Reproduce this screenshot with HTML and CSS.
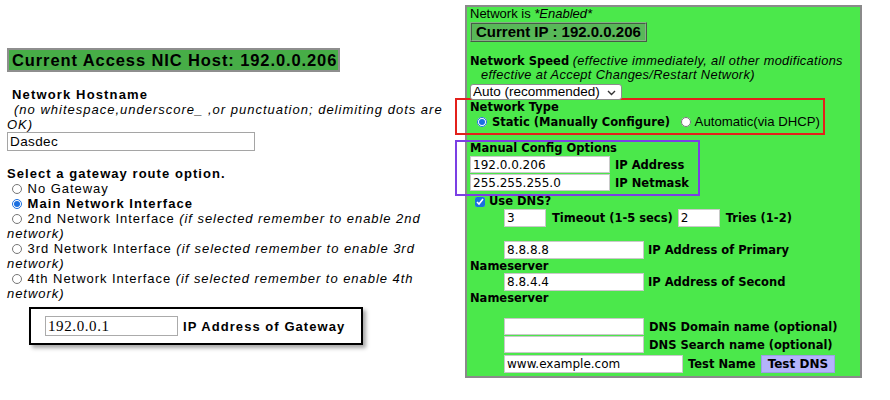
FILE: index.html
```html
<!DOCTYPE html>
<html>
<head>
<meta charset="utf-8">
<title>Network Settings</title>
<link rel="stylesheet" href="styles.css">
</head>
<body>
<div class="page">
  <div class="left">
    <div class="nic">Current Access NIC Host: 192.0.0.206</div>
    <div class="hostname">
      <div class="hlabel">Network Hostname</div>
      <div class="hnote">(no whitespace,underscore_ ,or punctuation; delimiting dots are<br>OK)</div>
      <input class="hinput" type="text" value="Dasdec">
    </div>
    <div class="gateway">
      <div class="gwtitle">Select a gateway route option.</div>
      <div class="opt"><input class="rad" type="radio" name="gw"> No Gateway</div>
      <div class="opt"><input class="rad" type="radio" name="gw" checked> <b>Main Network Interface</b></div>
      <div class="opt"><input class="rad" type="radio" name="gw"> 2nd Network Interface <i>(if selected remember to enable 2nd</i></div>
      <div class="opt wrap"><i>network)</i></div>
      <div class="opt"><input class="rad" type="radio" name="gw"> 3rd Network Interface <i>(if selected remember to enable 3rd</i></div>
      <div class="opt wrap"><i>network)</i></div>
      <div class="opt"><input class="rad" type="radio" name="gw"> 4th Network Interface <i>(if selected remember to enable 4th</i></div>
      <div class="opt wrap"><i>network)</i></div>
    </div>
    <div class="gwbox">
      <input class="gwinput" type="text" value="192.0.0.1">
      <b class="gwlabel">IP Address of Gateway</b>
    </div>
  </div>

  <div class="panel">
    <div class="status">Network is <i>*Enabled*</i></div>
    <div class="curip">Current IP : 192.0.0.206</div>
    <div class="speed"><b class="vb">Network Speed</b> <i>(effective immediately, all other modifications</i><br><i>effective at Accept Changes/Restart Network)</i></div>
    <div class="selwrap">
      <select class="sel"><option>Auto (recommended)</option></select>
      <svg class="chev" width="9" height="6" viewBox="0 0 9 6"><path d="M1 1 L4.5 4.5 L8 1" fill="none" stroke="#333" stroke-width="1.4"/></svg>
    </div>
    <div class="typebox">
      <div class="vb">Network Type</div>
      <div class="typerow">
        <input class="rad rstatic" type="radio" name="nt" checked><b class="vb">Static (Manually Configure)</b>
        <input class="rad rauto" type="radio" name="nt"><span class="auto">Automatic(via DHCP)</span>
      </div>
    </div>
    <div class="cfgbox">
      <div class="vb cfgtitle">Manual Config Options</div>
      <div class="cfgrow"><input class="cin wide" type="text" value="192.0.0.206"><b class="vb">IP Address</b></div>
      <div class="cfgrow"><input class="cin wide" type="text" value="255.255.255.0"><b class="vb">IP Netmask</b></div>
    </div>
    <div class="usedns"><input class="chk" type="checkbox" checked><b class="vb">Use DNS?</b></div>
    <div class="timerow">
      <input class="cin short" type="text" value="3"><b class="vb">Timeout (1-5 secs)</b>
      <input class="cin short" type="text" value="2"><b class="vb">Tries (1-2)</b>
    </div>
    <div class="nsrow first"><input class="cin ns" type="text" value="8.8.8.8"> IP Address of Primary Nameserver</div>
    <div class="nsrow"><input class="cin ns" type="text" value="8.8.4.4"> IP Address of Second Nameserver</div>
    <div class="optrow domain"><input class="cin wide" type="text" value=""><b class="vb">DNS Domain name (optional)</b></div>
    <div class="optrow search"><input class="cin wide" type="text" value=""><b class="vb">DNS Search name (optional)</b></div>
    <div class="optrow test"><input class="cin testin" type="text" value="www.example.com"><b class="vb">Test Name</b><button class="testbtn" type="button">Test DNS</button></div>
  </div>
</div>
</body>
</html>
```
FILE: styles.css
```css
body {
  margin: 0;
  background: #fff;
  color: #000;
  font-family: "Liberation Sans", Arial, sans-serif;
}

.page {
  display: flex;
  align-items: flex-start;
}

/* ---------- left column ---------- */
.left {
  width: 458px;
  padding: 48px 0 0 7px;
  font-size: 13px;
  line-height: 15px;
  letter-spacing: 0.95px;
}

.left b,
.hlabel,
.gwtitle {
  letter-spacing: 1.05px;
}

.nic {
  width: max-content;
  font-weight: bold;
  font-size: 16.5px;
  line-height: 20px;
  letter-spacing: 0.9px;
  background: #47ad47;
  border: 2px solid #8e8e8e;
  padding: 0 1px 0 3px;
}

.hostname {
  margin-top: 15px;
}

.hlabel {
  font-weight: bold;
  padding-left: 5px;
  letter-spacing: 1.15px;
}

.hnote {
  font-style: italic;
  text-indent: 7px;
  letter-spacing: 1px;
}

.hinput {
  display: block;
  box-sizing: border-box;
  width: 248px;
  height: 19px;
  margin: 0;
  padding: 0 2px;
  border: 1px solid #a5a5a5;
  font: 13.5px "Liberation Sans", Arial, sans-serif;
  letter-spacing: 0.4px;
  color: #000;
}

.gateway {
  margin-top: 15px;
}

.gwtitle {
  font-weight: bold;
}

.rad {
  width: 10px;
  height: 10px;
  margin: 0 1px 0 5px;
  vertical-align: -1px;
  accent-color: #1a6fe0;
}

.gwbox {
  margin: 6px 0 0 22px;
  width: 334px;
  height: 38px;
  box-sizing: border-box;
  border: 2px solid #000;
  box-shadow: 3px 3px 4px rgba(0, 0, 0, 0.35);
  padding: 0 14px;
  display: flex;
  align-items: center;
  gap: 5px;
}

.gwinput {
  box-sizing: border-box;
  width: 133px;
  height: 20px;
  margin: 0;
  padding: 0 2px;
  border: 1px solid #ababab;
  font: 15px "Liberation Serif", "Times New Roman", serif;
  letter-spacing: 0.6px;
  color: #000;
}

/* ---------- right panel ---------- */
.panel {
  margin-top: 5px;
  width: 397px;
  box-sizing: border-box;
  background: #4be84b;
  border: 2px solid #8a8a8a;
  padding: 0 3px 3px 3px;
  font-size: 13px;
  line-height: 14px;
}

.vb {
  font-family: "DejaVu Sans", Verdana, sans-serif;
  font-weight: bold;
  font-size: 11.5px;
}

.status {
  line-height: 14px;
}

.curip {
  width: max-content;
  margin-top: 1px;
  font-weight: bold;
  font-size: 15px;
  line-height: 16px;
  background: #58b858;
  border: 2px ridge #86b086;
  padding: 0 4px;
}

.speed {
  margin-top: 12px;
  padding-left: 11px;
  text-indent: -11px;
}

.speed i {
  font-size: 12.8px;
  letter-spacing: 0.35px;
}

.selwrap {
  position: relative;
  width: 152px;
  margin-top: 2px;
}

.sel {
  display: block;
  appearance: none;
  -webkit-appearance: none;
  box-sizing: border-box;
  width: 152px;
  height: 16px;
  margin: 0;
  padding: 0 0 0 2px;
  border: 1px solid #8c8c8c;
  border-radius: 3px;
  background: #fff;
  font: 13.5px "Liberation Sans", Arial, sans-serif;
  line-height: 14px;
  color: #000;
}

.chev {
  position: absolute;
  right: 6px;
  top: 6px;
}

.typebox {
  margin: -2px 0 0 -15px;
  width: 370px;
  box-sizing: border-box;
  border: 2px solid #e3201b;
  padding: 0 0 3px 13px;
}

.typerow {
  line-height: 16px;
}

.rstatic {
  margin: 0 5px 0 7px;
}

.rauto {
  margin: 0 4px 0 7px;
  accent-color: #fff;
}

.auto {
  font-size: 13.2px;
}

.cfgbox {
  margin: 5px 0 0 -15px;
  width: 245px;
  box-sizing: border-box;
  border: 2px solid #7b3fe4;
  padding: 0 0 3px 13px;
}

.cfgtitle {
  display: block;
  line-height: 13px;
}

.cfgrow {
  display: flex;
  align-items: center;
  gap: 5px;
  margin-top: 1px;
}

.cin {
  box-sizing: border-box;
  height: 17px;
  margin: 0;
  padding: 0 2px;
  border: 1px solid #c9c9c9;
  background: #fff;
  font: 12px "DejaVu Sans", Verdana, sans-serif;
  color: #000;
}

.wide {
  width: 140px;
}

.short {
  width: 42px;
  height: 18px;
}

.usedns {
  margin-top: -1px;
  line-height: 13px;
  display: flex;
  align-items: center;
}

.chk {
  width: 10px;
  height: 10px;
  margin: 0 4px 0 5px;
  accent-color: #1a6fe0;
}

.timerow {
  margin-top: 1px;
  padding-left: 34px;
  display: flex;
  align-items: center;
}

.timerow .vb {
  margin-left: 6px;
}

.timerow .short + .vb + .short {
  margin-left: 5px;
}

.nsrow {
  font-family: "DejaVu Sans", Verdana, sans-serif;
  font-weight: bold;
  font-size: 11.5px;
  line-height: 14px;
}

.nsrow.first {
  margin-top: 14px;
}

.ns {
  width: 140px;
  height: 18px;
  margin-left: 34px;
  vertical-align: middle;
}

.optrow {
  display: flex;
  align-items: center;
  gap: 5px;
  padding-left: 34px;
}

.domain {
  margin-top: 13px;
}

.search {
  margin-top: 1px;
}

.test {
  margin-top: 2px;
}

.testin {
  width: 179px;
  height: 18px;
}

.testbtn {
  height: 18px;
  margin: 0;
  padding: 0 6px;
  border: 1px solid #9d9de6;
  background: #b3b3fb;
  font-family: "DejaVu Sans", Verdana, sans-serif;
  font-weight: bold;
  font-size: 12px;
  color: #000;
}
```
